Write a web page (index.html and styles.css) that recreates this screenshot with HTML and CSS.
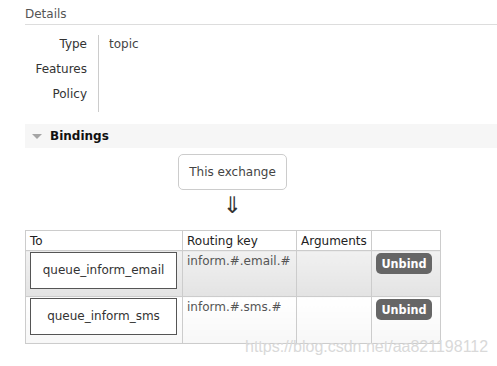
FILE: index.html
```html
<!DOCTYPE html>
<html>
<head>
<meta charset="utf-8">
<link rel="stylesheet" href="styles.css">
</head>
<body>
<div class="page">
  <h2 class="section-title">Details</h2>
  <table class="facts">
    <tr><th>Type</th><td>topic</td></tr>
    <tr><th>Features</th><td></td></tr>
    <tr><th>Policy</th><td></td></tr>
  </table>

  <div class="section-bar"><span class="tri"></span><span class="bar-title">Bindings</span></div>

  <div class="bindings">
    <div class="flow">
      <div class="this-exchange">This exchange</div>
      <div class="arrow">⇓</div>
    </div>
    <table class="list">
      <colgroup>
        <col class="c1"><col class="c2"><col class="c3"><col class="c4">
      </colgroup>
      <thead>
        <tr><th>To</th><th>Routing key</th><th>Arguments</th><th></th></tr>
      </thead>
      <tbody>
        <tr class="alt1">
          <td><span class="queue">queue_inform_email</span></td>
          <td class="key">inform.#.email.#</td>
          <td></td>
          <td><span class="btn">Unbind</span></td>
        </tr>
        <tr class="alt2">
          <td><span class="queue">queue_inform_sms</span></td>
          <td class="key">inform.#.sms.#</td>
          <td></td>
          <td><span class="btn">Unbind</span></td>
        </tr>
      </tbody>
    </table>
  </div>
</div>
<div class="watermark">https://blog.csdn.net/aa821198112</div>
</body>
</html>
```

FILE: styles.css
```css
html, body {
  margin: 0;
  padding: 0;
  background: #fff;
}
body {
  font-family: "DejaVu Sans", Verdana, sans-serif;
  font-size: 12px;
  color: #444;
  position: relative;
  width: 497px;
  height: 366px;
  overflow: hidden;
}
.page {
  padding-left: 25px;
}
.section-title {
  margin: 0;
  font-size: 12px;
  font-weight: normal;
  color: #555;
  line-height: 16px;
  padding: 6px 0 2px 0;
  border-bottom: 1px solid #ddd;
}
.facts {
  border-collapse: collapse;
  margin-top: 10px;
}
.facts th {
  width: 62px;
  text-align: right;
  font-weight: normal;
  color: #333;
  padding: 2px 11px 8px 0;
  line-height: 15px;
  height: 15px;
  vertical-align: top;
  border-right: 1px solid #ccc;
}
.facts tr:last-child th,
.facts tr:last-child td {
  padding-bottom: 10px;
}
.facts td {
  padding: 2px 0 8px 10px;
  line-height: 15px;
  vertical-align: top;
  color: #444;
}
.section-bar {
  margin-top: 12px;
  height: 24px;
  background: #f6f6f6;
  display: flex;
  align-items: center;
}
.tri {
  width: 0;
  height: 0;
  margin-left: 7px;
  border-left: 5px solid transparent;
  border-right: 5px solid transparent;
  border-top: 5px solid #a5a5a5;
  margin-top: 1px;
}
.bar-title {
  margin-left: 8px;
  font-weight: bold;
  color: #111;
}
.bindings {
  width: 415px;
}
.flow {
  display: flex;
  flex-direction: column;
  align-items: center;
  padding-top: 6px;
}
.this-exchange {
  border: 1px solid #ccc;
  border-radius: 5px;
  height: 34px;
  line-height: 34px;
  padding: 0 10px;
  color: #444;
}
.arrow {
  font-size: 23px;
  line-height: 24px;
  height: 24px;
  margin-top: 3px;
  color: #333;
}
.list {
  margin-top: 13px;
  border-collapse: collapse;
  width: 415px;
  table-layout: fixed;
}
.c1 { width: 157px; }
.c2 { width: 114px; }
.c3 { width: 75px; }
.c4 { width: 69px; }
.list th {
  text-align: left;
  font-weight: normal;
  color: #222;
  border: 1px solid #ccc;
  padding: 2px 4px 1px;
  line-height: 15px;
  height: 16px;
}
.list td {
  border: 1px solid #ccc;
  padding: 1px 4px 3px;
  vertical-align: top;
  line-height: 15px;
}
.list tr.alt1 td {
  background: linear-gradient(#f1f1f1, #e3e3e3);
  height: 39px;
}
.list tr.alt2 td {
  background: linear-gradient(#fff, #f7f7f7);
  height: 40px;
}
.list td.key {
  padding-top: 3px;
  color: #555;
}
.queue {
  display: block;
  box-sizing: border-box;
  width: 147px;
  height: 37px;
  line-height: 35px;
  border: 1px solid #555;
  background: #fff;
  text-align: center;
  color: #333;
}
.btn {
  display: inline-block;
  margin-top: 1px;
  width: 56px;
  height: 21px;
  line-height: 21px;
  text-align: center;
  background: #666;
  color: #fff;
  font-family: "DejaVu Sans Condensed", "DejaVu Sans", sans-serif;
  font-weight: bold;
  font-size: 12.5px;
  border-radius: 5px;
}
.watermark {
  position: absolute;
  left: 245px;
  top: 338px;
  font-family: "Liberation Sans", Arial, sans-serif;
  font-size: 16px;
  color: #d9d9d9;
  white-space: nowrap;
}
```
